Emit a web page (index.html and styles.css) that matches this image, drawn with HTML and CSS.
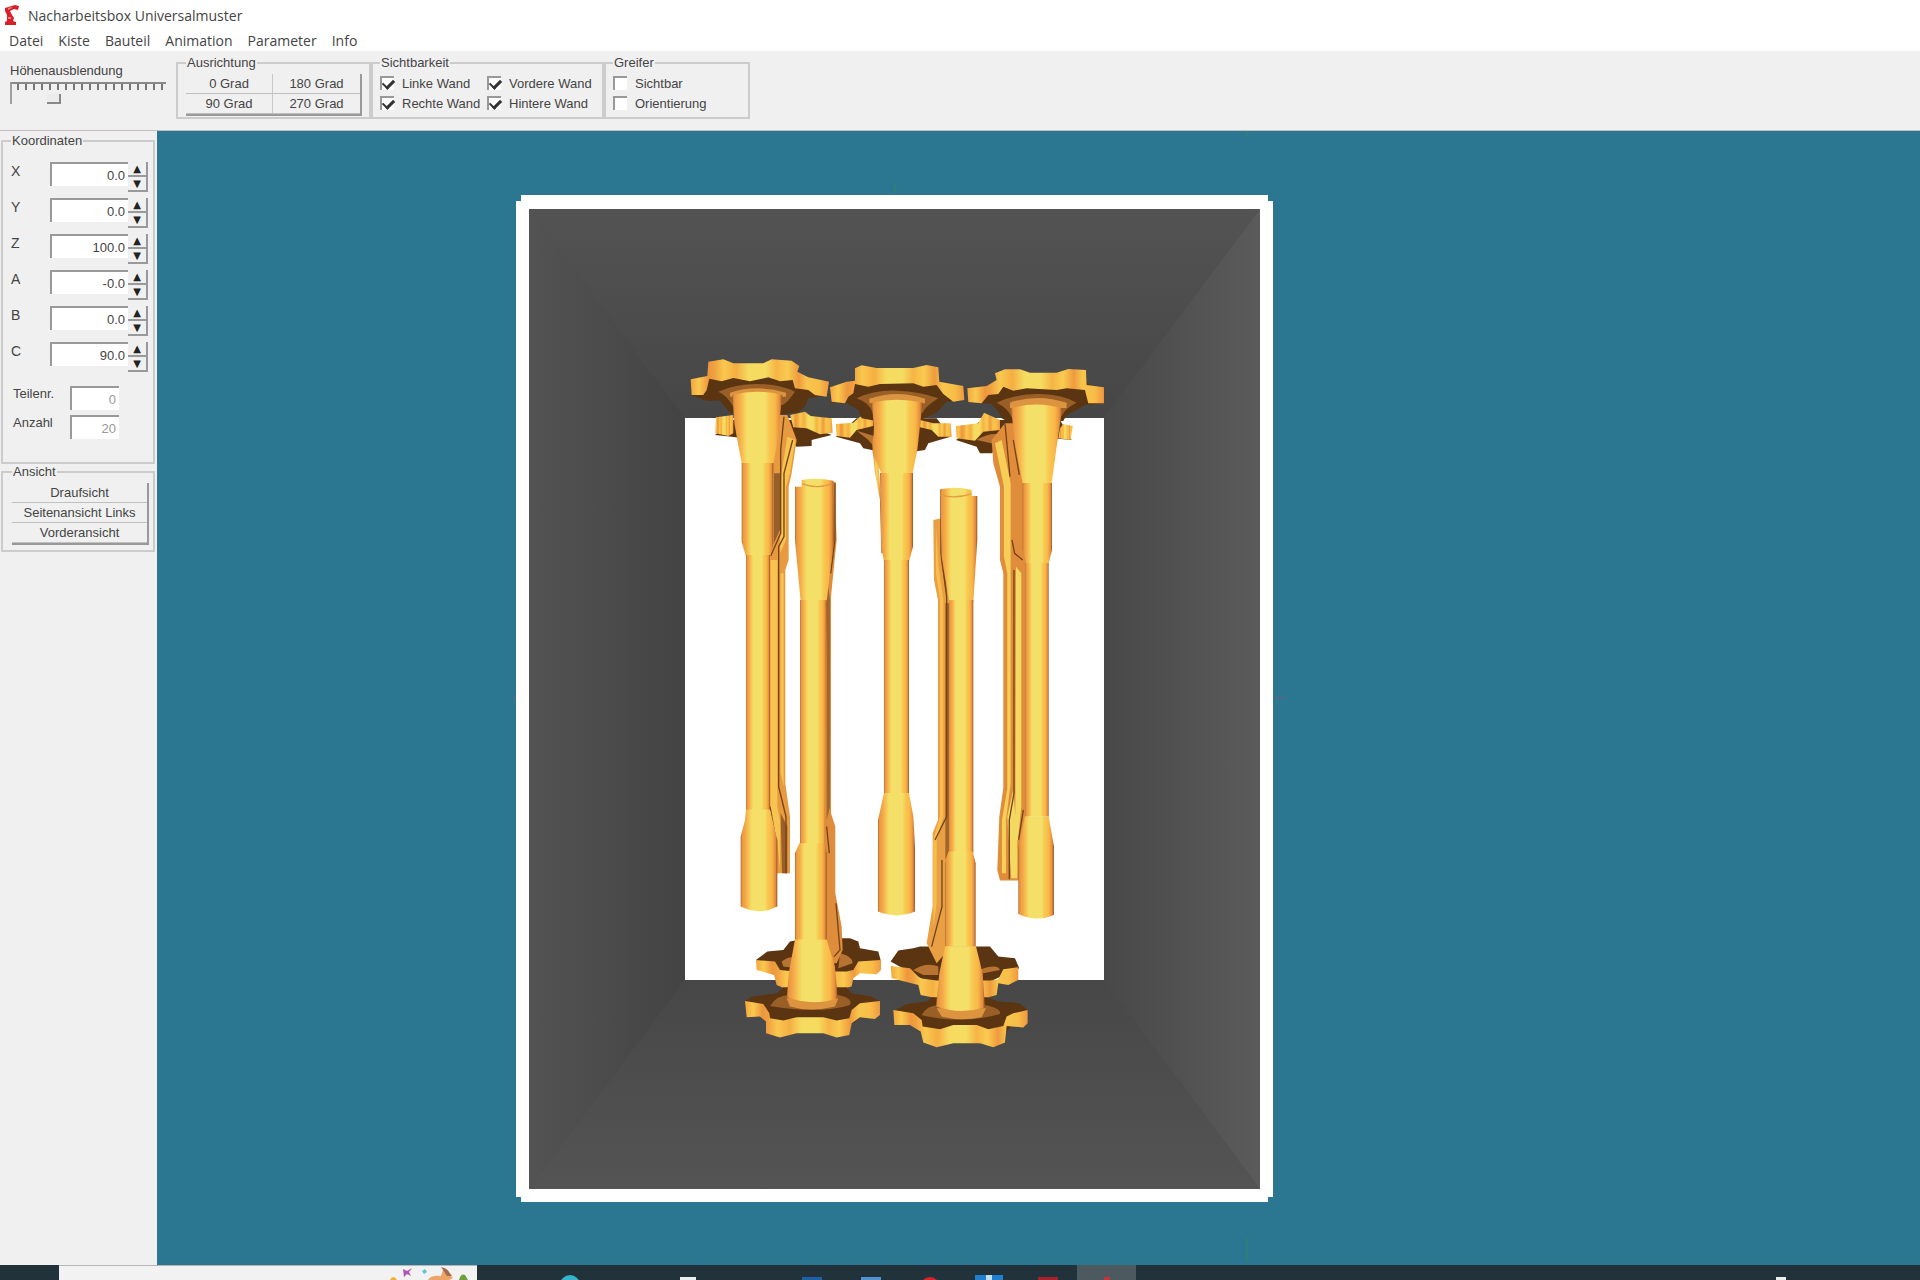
FILE: index.html
```html
<!DOCTYPE html>
<html lang="de">
<head>
  <meta charset="UTF-8">
  <title>Nacharbeitsbox Universalmuster</title>
  <link rel="stylesheet" href="styles.css">
</head>
<body>

  <header class="titel">
    <svg class="logo" viewBox="0 0 16 20">
      <path fill="#d8202a" d="M1 3 L11 0 L15 1 L14 5 L10 4 L6 6 L8 10 L10 13 L9 16 L12 17 V20 H1 V17 L3 16 L3 10 L1 6 Z"/>
      <path fill="#f47a7a" d="M4 3 L8 2 L8 3 L4 5 Z M4 12 H7 V14 H4 Z"/>
    </svg>
    <h1>Nacharbeitsbox Universalmuster</h1>
  </header>

  <nav class="menu">
    <a href="#">Datei</a>
    <a href="#">Kiste</a>
    <a href="#">Bauteil</a>
    <a href="#">Animation</a>
    <a href="#">Parameter</a>
    <a href="#">Info</a>
  </nav>

  <div class="werkzeuge">
    <div class="hoehe">
      <label for="hoehe">Höhenausblendung</label>
      <input type="range" id="hoehe" min="0" max="100" value="25">
    </div>
    <fieldset class="gruppe ausrichtung">
      <legend>Ausrichtung</legend>
      <div class="raster">
        <button>0 Grad</button>
        <button>180 Grad</button>
        <button>90 Grad</button>
        <button>270 Grad</button>
      </div>
    </fieldset>
    <fieldset class="gruppe sichtbarkeit">
      <legend>Sichtbarkeit</legend>
      <div class="haken">
        <label><input type="checkbox" checked>Linke Wand</label>
        <label><input type="checkbox" checked>Vordere Wand</label>
        <label><input type="checkbox" checked>Rechte Wand</label>
        <label><input type="checkbox" checked>Hintere Wand</label>
      </div>
    </fieldset>
    <fieldset class="gruppe greifer">
      <legend>Greifer</legend>
      <div class="haken">
        <label><input type="checkbox">Sichtbar</label>
        <label><input type="checkbox">Orientierung</label>
      </div>
    </fieldset>
  </div>

  <main class="arbeit">
    <aside class="seite">
      <fieldset class="gruppe koordinaten">
        <legend>Koordinaten</legend>
        <div class="zeile">
          <label for="x">X</label>
          <input type="text" id="x" value="0.0">
          <div class="dreh"><button aria-label="X mehr">▲</button><button aria-label="X weniger">▼</button></div>
        </div>
        <div class="zeile">
          <label for="y">Y</label>
          <input type="text" id="y" value="0.0">
          <div class="dreh"><button aria-label="Y mehr">▲</button><button aria-label="Y weniger">▼</button></div>
        </div>
        <div class="zeile">
          <label for="z">Z</label>
          <input type="text" id="z" value="100.0">
          <div class="dreh"><button aria-label="Z mehr">▲</button><button aria-label="Z weniger">▼</button></div>
        </div>
        <div class="zeile">
          <label for="a">A</label>
          <input type="text" id="a" value="-0.0">
          <div class="dreh"><button aria-label="A mehr">▲</button><button aria-label="A weniger">▼</button></div>
        </div>
        <div class="zeile">
          <label for="b">B</label>
          <input type="text" id="b" value="0.0">
          <div class="dreh"><button aria-label="B mehr">▲</button><button aria-label="B weniger">▼</button></div>
        </div>
        <div class="zeile">
          <label for="c">C</label>
          <input type="text" id="c" value="90.0">
          <div class="dreh"><button aria-label="C mehr">▲</button><button aria-label="C weniger">▼</button></div>
        </div>
        <div class="anzeige">
          <label for="teilenr">Teilenr.</label>
          <input type="text" id="teilenr" value="0" disabled>
          <label for="anzahl">Anzahl</label>
          <input type="text" id="anzahl" value="20" disabled>
        </div>
      </fieldset>
      <fieldset class="gruppe ansicht">
        <legend>Ansicht</legend>
        <div class="raster">
          <button>Draufsicht</button>
          <button>Seitenansicht Links</button>
          <button>Vorderansicht</button>
        </div>
      </fieldset>
    </aside>

    <!-- 3D-Ansicht der Kiste -->
    <svg class="szene" viewBox="157 131 1763 1134" preserveAspectRatio="xMidYMid meet">
      <defs>
        <linearGradient id="oben" x1="0" y1="0" x2="0" y2="1"><stop offset="0" stop-color="#535353"/><stop offset="1" stop-color="#464646"/></linearGradient>
        <linearGradient id="unten" x1="0" y1="0" x2="0" y2="1"><stop offset="0" stop-color="#474747"/><stop offset="1" stop-color="#545454"/></linearGradient>
        <linearGradient id="links"><stop offset="0" stop-color="#535353"/><stop offset="1" stop-color="#434343"/></linearGradient>
        <linearGradient id="rechts"><stop offset="0" stop-color="#484848"/><stop offset="1" stop-color="#5b5b5b"/></linearGradient>
        <linearGradient id="m">
          <stop offset="0" stop-color="#b06a2c"/><stop offset=".04" stop-color="#ea9640"/><stop offset=".15" stop-color="#f5ae4a"/>
          <stop offset=".22" stop-color="#f7c654"/><stop offset=".3" stop-color="#f4df68"/><stop offset=".66" stop-color="#f4df68"/>
          <stop offset=".74" stop-color="#f9c850"/><stop offset=".86" stop-color="#f8b748"/><stop offset=".95" stop-color="#e58b3c"/><stop offset="1" stop-color="#8e5222"/>
        </linearGradient>
        <linearGradient id="h">
          <stop offset="0" stop-color="#b56c2a"/><stop offset=".2" stop-color="#f5a843"/><stop offset=".4" stop-color="#f7d55c"/>
          <stop offset=".6" stop-color="#f7b346"/><stop offset=".75" stop-color="#a0602a"/><stop offset="1" stop-color="#e8983e"/>
        </linearGradient>
        <linearGradient id="rand">
          <stop offset="0" stop-color="#f5a53d"/><stop offset=".06" stop-color="#f9c94f"/><stop offset=".13" stop-color="#ee963e"/><stop offset=".17" stop-color="#f0a040"/>
          <stop offset=".24" stop-color="#f9c84e"/><stop offset=".33" stop-color="#f5ae43"/><stop offset=".42" stop-color="#f5dc60"/><stop offset=".54" stop-color="#f5dc60"/>
          <stop offset=".62" stop-color="#f6b445"/><stop offset=".7" stop-color="#f9cb50"/><stop offset=".78" stop-color="#ef9a3e"/><stop offset=".84" stop-color="#f7c54c"/><stop offset=".93" stop-color="#f8bd48"/><stop offset="1" stop-color="#ee983e"/>
        </linearGradient>
      </defs>

      <path fill="#fff" d="M521 195H1268V201H1273V1197H1268V1202H521V1197H516V201H521Z"/>
      <path fill="#4b4b4b" d="M529 209H1260V1189H529Z"/>
      <path fill="url(#oben)" d="M529 209H1260L1104 418H685Z"/>
      <path fill="url(#unten)" d="M685 980H1104L1260 1189H529Z"/>
      <path fill="url(#links)" d="M529 209L685 418V980L529 1189Z"/>
      <path fill="url(#rechts)" d="M1260 209L1104 418V980L1260 1189Z"/>
      <path fill="#fff" d="M685 418H1104V980H685Z"/>
      <path stroke="#2f8a62" d="M895 183V193M1247 131V136M1247 1238V1262"/>
      <path stroke="#6b5f82" d="M1275 698H1286M512 698H516"/>

      <g transform="translate(680 340) scale(.3333)">
        <!-- hintere Teile, Köpfe oben -->
        <g fill="#5b3511">
          <path d="M105 285L160 240H345L455 285L395 300V318L350 320L320 300L190 295L155 290Z"/>
          <path d="M468 290L530 235H770L812 290L745 310L735 330L700 335L600 335L550 325L540 310Z"/>
          <path d="M828 300L905 240L1140 240L1175 300L1120 295L960 320L935 340L900 340L890 320Z"/>
        </g>
        <g fill="url(#rand)">
          <path d="M108 232L160 225V280L145 288L106 280Z"/>
          <path d="M330 225L375 215L392 228L455 235L458 278L420 283L380 265L340 262Z"/>
          <path d="M468 252L520 248L540 230H580V258L530 270L510 293L470 288Z"/>
          <path d="M720 240L760 250L812 250L815 290L775 290L755 270L720 262Z"/>
          <path d="M828 258L895 250L912 218L960 240V270L910 275L885 302L830 295Z"/>
          <path d="M1140 265L1150 252L1178 258L1172 300L1135 295Z"/>
        </g>
        <path fill="#b77331" d="M310 265Q350 290 340 340L300 300ZM530 272L590 290V330L565 300ZM890 300Q930 275 970 285L950 340L935 310Z"/>
        <path fill="#e79a40" d="M262 225H322L350 300L335 400L326 440V660L316 690V1330L330 1430V1600H290V1440L262 1400Z"/>
        <path fill="#f7c450" d="M322 290L346 300L330 400L318 440V600L300 640V430ZM272 660H292V1400L300 1440V1590L292 1500L272 1410ZM302 700H311V1340L302 1300Z"/>
        <path fill="#97602a" d="M282 400H300V570L282 610ZM302 1420L322 1460V1600H306Z"/>
        <path fill="url(#h)" d="M575 300L590 280L612 640H604L600 480L585 400Z"/>
        <path fill="#e08d3b" d="M935 300L975 250H1012L1045 420V1500L1018 1540V1622H960L952 1590L958 1430L970 1345V700L960 660V440L940 370Z"/>
        <path fill="#f6cf58" d="M945 310L965 300L992 430V1330L978 1440V1600H966V1440L982 1345V700L972 650V440Z"/>
        <path fill="#f4d961" d="M1008 680L1024 700V1400L1014 1500H1006ZM982 1430L1000 1350L1012 1500V1615H994Z"/>
        <path fill="none" stroke="#74431a" stroke-width="4" d="M312 230L302 330V580L272 648M338 300L312 400V590L296 620V1340L318 1430V1600M975 250L990 410M1000 300L1018 405M996 600L1004 640L1028 660M1002 690V1360L988 1440V1618M270 1400L288 1500M1030 1410L1016 1500"/>

        <!-- hintere Teile, Köpfe unten -->
        <g fill="#5b3511">
          <path d="M228 1860L262 1835L310 1830L330 1805L380 1795H510L535 1805L540 1825L595 1835L603 1865L500 1900H300Z"/>
          <path d="M632 1865L655 1832L700 1825L720 1820H930L955 1850L1005 1855L1018 1885L930 1925H740Z"/>
        </g>
        <path fill="url(#rand)" d="M228 1860L285 1865L300 1890L345 1895H500L520 1890L535 1865L603 1860V1890L590 1903L540 1900L520 1915L515 1940L480 1948H320L290 1935L282 1905L230 1890Z"/>
        <path fill="url(#rand)" d="M632 1878L690 1885L720 1915L770 1922H930L955 1918L970 1888L1015 1882V1920L985 1935L955 1930L950 1965L915 1975H770L722 1965L715 1935L635 1915Z"/>
        <path fill="#b77331" d="M305 1865Q330 1845 350 1855V1885L310 1880ZM480 1840Q520 1850 518 1870L475 1885ZM700 1890Q740 1865 775 1880V1905L730 1905ZM900 1890Q950 1870 960 1890L910 1900Z"/>
        <path fill="#dd8d3b" d="M425 430L467 425V515L470 600L460 700L453 770V1420L466 1460V1660L485 1760L488 1830L470 1870H400V780Z"/>
        <path fill="#e9a044" d="M760 540L785 535L830 660V1800L770 1870L740 1810L758 1700V1480L774 1440V780L762 720Z"/>
        <path fill="#a2652a" d="M440 700L450 780V1400L440 1440ZM796 790H808V1530L796 1560ZM783 470L800 640V770L783 660Z"/>
        <path fill="#f8bd4c" d="M768 560L776 680L790 780V1430L770 1500V1690L760 1760V1500L780 1430V780L768 700Z"/>
        <path fill="none" stroke="#74431a" stroke-width="4" d="M465 430V600L452 700M440 1460L448 1540M783 470V640L800 770V1430L765 1500M786 1560V1700L755 1820M468 1690L480 1830L462 1850"/>

        <!-- linkes Teil -->
        <path fill="#5b3511" d="M32 165L85 110L340 118L447 165L385 175L375 200L355 217L310 222L150 220L135 200L120 182L80 182Z"/>
        <path fill="url(#rand)" d="M32 118L82 108L85 65L130 58L160 70H250L275 58L335 62L358 78L352 95L385 112L447 125L440 170L405 165L385 150L345 145L338 120L300 124L265 112L210 124L160 114L125 124L88 116L80 150L70 165L35 165Z"/>
        <path fill="#9a5f27" d="M115 155Q165 132 230 132T345 155Q325 185 308 195L160 200Q140 165 115 155Z"/>
        <path fill="#dc9440" d="M150 158Q230 132 318 158V170H150Z"/>
        <path fill="url(#m)" d="M157 165Q230 145 307 165L290 320L280 370H185L172 300L163 250Z"/>
        <path fill="url(#m)" d="M185 369H280V610L270 650H198L185 605Z"/>
        <path fill="url(#m)" d="M198 645H270V1410H198Z"/>
        <path fill="url(#m)" d="M198 1409H270L292 1500V1700Q240 1728 182 1700V1490L195 1440Z"/>

        <!-- mittleres Teil -->
        <path fill="#5b3511" d="M452 188L525 130H770L855 180L800 185L770 218L720 240L600 245L545 235L535 210L500 190Z"/>
        <path fill="url(#rand)" d="M450 142L500 125L525 122V85L545 76L590 84H700L740 75L775 82L778 125L850 138L853 180L820 185L790 162L770 135L730 140L700 130L600 132L565 140L525 132L520 160L505 170L495 190L455 185Z"/>
        <path fill="#9a5f27" d="M530 175Q580 150 650 152T775 175Q735 200 728 218L578 218Q570 190 530 175Z"/>
        <path fill="#dc9440" d="M568 176Q650 148 735 176V190H568Z"/>
        <path fill="url(#m)" d="M575 188Q650 170 728 188L712 330L698 400H604L578 340L582 260Z"/>
        <path fill="url(#m)" d="M600 399H699V620L687 665H612L604 620Z"/>
        <path fill="url(#m)" d="M612 660H687V1360H612Z"/>
        <path fill="url(#m)" d="M612 1359H687L700 1430L705 1520V1715Q650 1738 594 1715V1440Z"/>

        <!-- rechtes Teil -->
        <path fill="#5b3511" d="M865 185L970 125H1220L1272 190L1215 195L1190 210L1160 225L1150 243L990 248L965 235L955 215L935 192Z"/>
        <path fill="url(#rand)" d="M862 145L920 138L950 120L945 100L975 88L1020 88L1050 98H1130L1165 87L1218 90L1220 135L1272 142V190L1225 190L1215 150L1160 145L1130 150L1040 145L1000 152L970 140L955 162L925 165L905 190L865 186Z"/>
        <path fill="#9a5f27" d="M950 188Q1010 160 1080 162T1190 188Q1155 205 1145 228L995 232Q985 205 950 188Z"/>
        <path fill="#dc9440" d="M990 188Q1070 160 1160 188V204H990Z"/>
        <path fill="url(#m)" d="M993 205Q1070 182 1147 205L1130 320L1115 430H1028L1005 310Z"/>
        <path fill="url(#m)" d="M1028 429H1116V630L1105 675H1040L1028 630Z"/>
        <path fill="url(#m)" d="M1035 670H1106V1430H1035Z"/>
        <path fill="url(#m)" d="M1035 1429H1106L1122 1520V1725Q1070 1748 1015 1722V1520Z"/>

        <!-- vordere Teile, Köpfe unten -->
        <path fill="#5b3511" d="M195 1985L215 1970L290 1960L310 1942H500L515 1960L575 1970L600 1985L520 2050H270Z"/>
        <path fill="url(#rand)" d="M195 1983L250 1992L268 2020L270 2035L310 2042L350 2032H430L470 2042L508 2035L515 2010L540 1990L600 1983V2025L585 2037L540 2032L515 2050L508 2085L470 2093L430 2080H350L300 2093L258 2080V2045L240 2030L200 2032Z"/>
        <path fill="#9a5f27" d="M270 1998Q290 1965 330 1965H475Q520 1975 510 1995Q420 2024 270 1998Z"/>
        <path fill="#dc9440" d="M320 1975H475L465 2000Q390 2018 330 2000Z"/>
        <path fill="url(#m)" d="M365 420Q410 412 460 422L462 600L440 785H362L345 600V440H365Z"/>
        <path fill="url(#m)" d="M360 780H440L432 1515H360Z"/>
        <path fill="url(#m)" d="M358 1510H433L440 1540V1800H345V1540Z"/>
        <path fill="url(#m)" d="M345 1799H440L465 1880L473 1975Q400 2000 320 1972L328 1890Z"/>
        <path fill="none" stroke="#e49a40" stroke-width="4" d="M367 432Q410 448 455 432"/>

        <path fill="#5b3511" d="M640 2015L680 1992L740 1985L755 1972H920L955 1985L1020 1990L1043 2010L980 2075H740Z"/>
        <path fill="url(#rand)" d="M640 2010L700 2020L725 2040L728 2060L780 2068L820 2055H890L925 2068L970 2058L980 2030L1000 2020L1043 2010V2050L1030 2063L980 2058L975 2108L940 2122L900 2110H820L770 2122L730 2108L722 2075L690 2055L643 2055Z"/>
        <path fill="#9a5f27" d="M725 2026Q740 1995 780 1995H915Q965 2005 960 2022Q850 2054 725 2026Z"/>
        <path fill="#dc9440" d="M770 2005H918L905 2032Q840 2045 785 2030Z"/>
        <path fill="url(#m)" d="M780 448Q830 438 875 450V468H892V600L880 785H808L785 650Z"/>
        <path fill="url(#m)" d="M808 780H880V1540H806Z"/>
        <path fill="url(#m)" d="M806 1535H878L887 1570V1820H795V1570Z"/>
        <path fill="url(#m)" d="M795 1819H888L908 1900L915 2003Q840 2025 768 2000L778 1900Z"/>
        <path fill="none" stroke="#e49a40" stroke-width="4" d="M782 465Q825 478 875 462"/>
      </g>
    </svg>
  </main>

  <footer class="leiste">
    <div class="start"></div>
    <div class="suche">
      <svg viewBox="0 0 90 14">
        <path fill="#b054b8" d="M16 3L20 5L25 2L22 6L24 10L20 8L17 11Z"/>
        <path fill="#5cc4dc" d="M35 5L38 3L40 6L37 8Z"/>
        <path fill="#f0b030" d="M3 14Q6 8 10 14Z"/>
        <path fill="#eda468" d="M41 14Q44 9 54 10L56 4L62 8L66 12L62 14Z"/>
        <path fill="#a86a4c" d="M54 1Q60 2 62 6L65 10L60 10Z"/>
        <path fill="#6ca03c" d="M72 14Q74 7 78 9L81 14Z"/>
      </svg>
    </div>
    <div class="apps">
      <span class="app tuerkis"></span>
      <span class="app"></span>
      <span class="app weiss"></span>
      <span class="app"></span>
    </div>
    <div class="apps offen">
      <span class="app blau"></span>
      <span class="app hellblau"></span>
      <span class="app rot"></span>
      <span class="app karte"></span>
      <span class="app dunkelrot"></span>
      <span class="app aktiv"></span>
    </div>
    <span class="app weiss info"></span>
  </footer>

</body>
</html>
```
FILE: styles.css
```css
* {
  box-sizing: border-box;
  margin: 0;
  padding: 0;
}

body {
  display: flex;
  flex-direction: column;
  height: 100vh;
  overflow: hidden;
  background-color: #ffffff;
  color: #444;
  font-family: "Liberation Sans", Arial, sans-serif;
  font-size: 13px;
}

input, button {
  font: inherit;
  color: inherit;
  border: none;
  border-radius: 0;
}

.titel {
  display: flex;
  align-items: center;
  gap: 8px;
  height: 30px;
  padding-left: 4px;
}

.logo {
  width: 16px;
  height: 20px;
}

.titel h1 {
  font-family: "Open Sans", sans-serif;
  font-size: 14px;
  font-weight: normal;
}

.menu {
  display: flex;
  align-items: center;
  gap: 15px;
  height: 21px;
  padding-left: 9px;
}

.menu a {
  color: #444;
  font-family: "Open Sans", sans-serif;
  font-size: 14px;
  line-height: 20px;
  text-decoration: none;
}

.werkzeuge {
  display: flex;
  height: 80px;
  padding: 5px 0 11px 10px;
  background-color: #f0f0f0;
  border-bottom: 1px solid #c4bfbc;
}

.hoehe {
  width: 156px;
  margin-right: 10px;
  padding-top: 7px;
}

.hoehe label {
  display: block;
  line-height: 16px;
}

.hoehe input {
  display: block;
  appearance: none;
  width: 100%;
  height: 22px;
  margin-top: 3px;
  border-top: 2px solid #8a8a8a;
  border-left: 2px solid #a0a0a0;
  background: repeating-linear-gradient(to right, transparent 0 5px, #777 5px 7px, transparent 7px 8px) 0 0 / 100% 6px no-repeat;
}

.hoehe input::-webkit-slider-thumb {
  appearance: none;
  width: 14px;
  height: 10px;
  margin-top: 9px;
  background-color: #ececec;
  border-right: 2px solid #888;
  border-bottom: 2px solid #888;
}

.gruppe {
  min-width: 0;
  border: 2px solid #cccccc;
}

.gruppe legend {
  padding: 0 1px;
  line-height: 14px;
}

.ausrichtung {
  width: 195px;
  padding: 4px 7px 0 8px;
}

.sichtbarkeit {
  width: 233px;
  padding: 3px 0 0 7px;
}

.greifer {
  width: 146px;
  padding: 3px 0 0 7px;
}

.raster {
  display: grid;
  border-right: 2px solid #999;
  border-bottom: 2px solid #999;
}

.ausrichtung .raster {
  grid-template-columns: 1fr 1fr;
}

.raster button {
  height: 20px;
  background-color: #f0f0f0;
  border-bottom: 1px solid #c0c0c0;
}

.ausrichtung button:nth-child(odd) {
  border-right: 1px solid #c8c8c8;
}

.haken {
  display: grid;
  grid-template-columns: 107px 1fr;
}

.greifer .haken {
  grid-template-columns: 1fr;
}

.haken label {
  display: flex;
  align-items: center;
  height: 20px;
  white-space: nowrap;
}

.haken input {
  appearance: none;
  flex: none;
  width: 14px;
  height: 14px;
  margin-right: 8px;
  background-color: #ffffff;
  border-top: 2px solid #999;
  border-left: 2px solid #999;
}

.haken input:checked::before {
  content: "";
  display: block;
  width: 9px;
  height: 5px;
  margin: 1px;
  border-left: 2px solid #333;
  border-bottom: 3px solid #333;
  transform: rotate(-45deg);
}

.arbeit {
  flex: 1;
  display: flex;
  min-height: 0;
}

.seite {
  width: 157px;
  padding: 3px 2px 0 1px;
  background-color: #f0f0f0;
}

.koordinaten {
  height: 330px;
  padding: 14px 6px 0 8px;
}

.zeile {
  display: grid;
  grid-template-columns: 39px 78px 20px;
  height: 36px;
}

.zeile label {
  font-size: 14px;
  line-height: 18px;
}

.seite input {
  height: 24px;
  padding-right: 3px;
  background-color: #ffffff;
  border-top: 2px solid #999;
  border-left: 2px solid #999;
  text-align: right;
}

.seite input:disabled {
  color: #999;
}

.zeile input {
  width: 78px;
}

.dreh button {
  display: block;
  width: 20px;
  height: 15px;
  background-color: #f0f0f0;
  border-right: 2px solid #999;
  border-bottom: 2px solid #999;
  color: #222;
  font-family: "DejaVu Sans", sans-serif;
  font-size: 10px;
  line-height: 12px;
}

.anzeige {
  display: grid;
  grid-template-columns: 59px 49px;
  row-gap: 5px;
  padding-top: 8px;
}

.anzeige label {
  padding-left: 2px;
}

.anzeige input {
  width: 49px;
}

.ansicht {
  height: 87px;
  margin-top: 1px;
  padding: 4px 4px 0 9px;
}

.szene {
  flex: 1;
  min-width: 0;
  height: 100%;
  background-color: #2b7792;
}

.leiste {
  display: flex;
  height: 15px;
  background-color: #22323a;
}

.start {
  width: 59px;
}

.suche {
  width: 418px;
  background-color: #f2f2f2;
  border-top: 1px solid #b5b5b5;
}

.suche svg {
  display: block;
  width: 90px;
  height: 14px;
  margin-left: auto;
}

.apps {
  display: flex;
  margin-left: 63px;
}

.offen {
  margin-left: 6px;
}

.app {
  width: 59px;
  padding-top: 12px;
}

.app::before {
  content: "";
  display: block;
  width: 20px;
  height: 20px;
  margin: 0 auto;
}

.apps, .leiste {
  overflow: hidden;
}

.tuerkis {
  padding-top: 10px;
}

.tuerkis::before {
  background-color: #35b4cc;
  border-radius: 50%;
}

.weiss::before {
  width: 16px;
  background-color: #e8eeee;
}

.blau::before {
  background-color: #1d5fa8;
}

.hellblau::before {
  background-color: #4f93d0;
}

.rot::before {
  background-color: #d8232b;
  border-radius: 50%;
}

.karte {
  padding-top: 10px;
}

.karte::before {
  width: 28px;
  background: linear-gradient(to right, #1f7fd0 11px, #bfe0f5 11px 17px, #1f7fd0 17px);
}

.dunkelrot::before {
  background-color: #a8202a;
}

.aktiv {
  background-color: #4c595f;
}

.aktiv::before {
  width: 6px;
  background-color: #c8303a;
}

.info {
  margin-left: auto;
  margin-right: 110px;
}

.info::before {
  width: 10px;
}
```
